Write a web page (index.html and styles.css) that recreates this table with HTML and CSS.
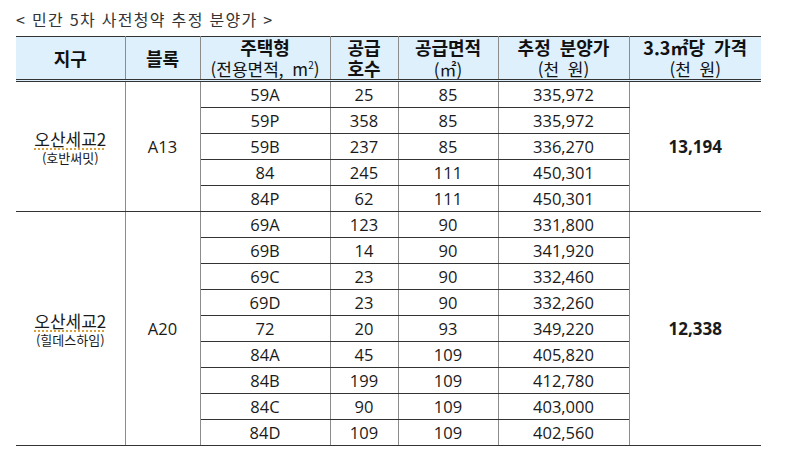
FILE: index.html
```html
<!DOCTYPE html>
<html lang="ko">
<head>
<meta charset="utf-8">
<link rel="stylesheet" href="styles.css">
</head>
<body>
<div class="page">
  <p class="caption">&lt; 민간 5차 사전청약 추정 분양가 &gt;</p>
  <table class="price-table">
    <colgroup>
      <col class="c1"><col class="c2"><col class="c3"><col class="c4"><col class="c5"><col class="c6"><col class="c7">
    </colgroup>
    <thead>
      <tr>
        <th><span class="b">지구</span></th>
        <th><span class="b">블록</span></th>
        <th><span class="b">주택형</span><span class="n">(전용면적, m<sup>2</sup>)</span></th>
        <th><span class="b">공급</span><span class="b">호수</span></th>
        <th><span class="b">공급면적</span><span class="n">(㎡)</span></th>
        <th><span class="b">추정 분양가</span><span class="n">(천 원)</span></th>
        <th><span class="b">3.3㎡당 가격</span><span class="n">(천 원)</span></th>
      </tr>
    </thead>
    <tbody>
      <tr>
        <td rowspan="5" class="district"><span class="dname"><span class="uline">오산세교2</span></span><span class="dsub">(호반써밋)</span></td>
        <td rowspan="5">A13</td>
        <td>59A</td><td>25</td><td>85</td><td>335,972</td>
        <td rowspan="5" class="strong">13,194</td>
      </tr>
      <tr><td>59P</td><td>358</td><td>85</td><td>335,972</td></tr>
      <tr><td>59B</td><td>237</td><td>85</td><td>336,270</td></tr>
      <tr><td>84</td><td>245</td><td>111</td><td>450,301</td></tr>
      <tr><td>84P</td><td>62</td><td>111</td><td>450,301</td></tr>
      <tr>
        <td rowspan="9" class="district"><span class="dname"><span class="uline">오산세교2</span></span><span class="dsub">(힐데스하임)</span></td>
        <td rowspan="9">A20</td>
        <td>69A</td><td>123</td><td>90</td><td>331,800</td>
        <td rowspan="9" class="strong">12,338</td>
      </tr>
      <tr><td>69B</td><td>14</td><td>90</td><td>341,920</td></tr>
      <tr><td>69C</td><td>23</td><td>90</td><td>332,460</td></tr>
      <tr><td>69D</td><td>23</td><td>90</td><td>332,260</td></tr>
      <tr><td>72</td><td>20</td><td>93</td><td>349,220</td></tr>
      <tr><td>84A</td><td>45</td><td>109</td><td>405,820</td></tr>
      <tr><td>84B</td><td>199</td><td>109</td><td>412,780</td></tr>
      <tr><td>84C</td><td>90</td><td>109</td><td>403,000</td></tr>
      <tr><td>84D</td><td>109</td><td>109</td><td>402,560</td></tr>
    </tbody>
  </table>
</div>
</body>
</html>
```
FILE: styles.css
```css
html, body {
  margin: 0;
  padding: 0;
  background: #ffffff;
}
.page {
  padding: 8px 0 0 16px;
  font-family: "Open Sans", "Noto Sans CJK KR", sans-serif;
  color: #1a1a1a;
}
.caption {
  margin: 0 0 6px 0;
  font-family: "Noto Sans CJK KR", sans-serif;
  font-size: 16px;
  line-height: 22px;
  letter-spacing: 1.3px;
  color: #333;
}
.price-table {
  border-collapse: collapse;
  width: 745px;
  table-layout: fixed;
}
.c1 { width: 109px; }
.c2 { width: 75px; }
.c3 { width: 130px; }
.c4 { width: 68px; }
.c5 { width: 100px; }
.c6 { width: 131px; }
.c7 { width: 132px; }
.price-table th {
  background: #ddf0fb;
  border-top: 1px solid #333;
  border-bottom: 3px double #333;
  border-left: 1px solid #8c8c8c;
  border-right: 1px solid #8c8c8c;
  height: 42px;
  padding: 0;
  font-family: "Noto Sans CJK KR", sans-serif;
  font-weight: 700;
  font-size: 18px;
  line-height: 21px;
  word-spacing: 4px;
  color: #111;
  vertical-align: middle;
}
.price-table th .b {
  display: block;
  height: 21px;
  font-weight: 700;
}
.price-table th .n {
  display: block;
  height: 21px;
  font-weight: 400;
  font-size: 17px;
}
.price-table th sup { font-size: 10px; line-height: 0; vertical-align: 7px; }
.price-table th:first-child,
.price-table td.district { border-left: none; }
.price-table th:last-child,
.price-table td.strong { border-right: none; }
.price-table td {
  height: 25px;
  padding: 0;
  text-align: center;
  vertical-align: middle;
  font-size: 16.5px;
  line-height: 20px;
  border-top: 1px solid #333;
  border-bottom: 1px solid #333;
  border-left: 1px solid #8c8c8c;
  border-right: 1px solid #8c8c8c;
}
.price-table td.strong { font-weight: 700; font-size: 17px; }
.dname {
  display: block;
  height: 21px;
  line-height: 21px;
  font-family: "Noto Sans CJK KR", sans-serif;
  font-size: 17px;
}
.uline {
  text-decoration-line: underline;
  text-decoration-style: dotted;
  text-decoration-color: #d9a13a;
  text-decoration-thickness: 2px;
  text-underline-offset: 3px;
}
.dsub {
  display: block;
  height: 17px;
  line-height: 17px;
  font-family: "Noto Sans CJK KR", sans-serif;
  font-size: 13px;
}
```
